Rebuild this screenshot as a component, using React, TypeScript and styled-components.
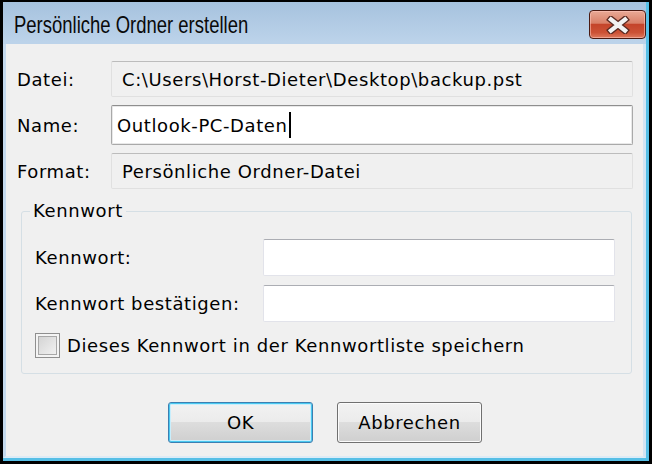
import React from "react"
import styled, { createGlobalStyle } from "styled-components"

const GlobalStyle = createGlobalStyle`
  html, body {
    margin: 0;
    padding: 0;
    background: #000000;
  }
  * {
    box-sizing: border-box;
  }
`

const Window = styled.div`
  width: 652px;
  height: 464px;
  padding: 2px 3px 3px 3px;
  background: #000000;
  font-family: "DejaVu Sans", Verdana, sans-serif;
  font-size: 18px;
  letter-spacing: 0.6px;
  color: #000000;
`

const Frame = styled.div`
  display: flex;
  flex-direction: column;
  height: 100%;
  background: linear-gradient(#a6c2de, #bcd3ea 40px);
  border-right: 3px solid #56bfe6;
  border-bottom: 3px solid #56bfe6;
`

const TitleBar = styled.div`
  display: flex;
  align-items: center;
  justify-content: space-between;
  height: 42px;
  padding: 3px 0 0 11px;
  flex-shrink: 0;
`

const TitleText = styled.span`
  display: inline-block;
  font-family: "Liberation Sans", Arial, sans-serif;
  font-size: 24px;
  letter-spacing: 0;
  transform: scaleX(0.77);
  transform-origin: left center;
  white-space: nowrap;
  color: #0a0a0a;
`

const CloseButton = styled.div`
  display: flex;
  align-items: center;
  justify-content: center;
  width: 57px;
  height: 29px;
  border: 1px solid #4a1a12;
  border-radius: 4px;
  background: linear-gradient(#e9a996 0%, #d98068 45%, #c4442a 50%, #cc5236 80%, #de7a5e 100%);
  box-shadow: inset 0 0 0 1px rgba(255, 200, 190, 0.55);
`

const Content = styled.div`
  flex: 1;
  display: flex;
  flex-direction: column;
  background: #f0f0f0;
  border-left: 3px solid #c5daee;
  border-right: 3px solid #d2e4f3;
  border-bottom: 2px solid #dcebf6;
  padding: 17px 10px 0 11px;
`

const FileGrid = styled.div`
  display: grid;
  grid-template-columns: 94px 1fr;
  row-gap: 8px;
  align-items: center;
`

const Label = styled.span`
  white-space: nowrap;
`

const ReadOnlyField = styled.div`
  display: flex;
  align-items: center;
  height: 36px;
  padding-left: 10px;
  background: #f0f0f0;
  border: 1px solid #e0e0e0;
  border-top-color: #bcbcbc;
  border-radius: 2px;
  white-space: nowrap;
`

const EditField = styled.div`
  display: flex;
  align-items: center;
  height: 40px;
  padding-left: 5px;
  background: #ffffff;
  border: 1px solid #a9a9a9;
  border-top-color: #8e8e8e;
  border-radius: 2px;
  box-shadow: inset 0 0 0 1px #e8e8e8;
  white-space: nowrap;
`

const Caret = styled.span`
  display: inline-block;
  width: 2px;
  height: 26px;
  margin-left: 1px;
  background: #000000;
`

const GroupBox = styled.fieldset`
  margin: 11px 1px 0 4px;
  padding: 17px 16px 15px 13px;
  border: 1px solid #d5dfe5;
  border-radius: 3px;
  min-width: 0;
`

const Legend = styled.legend`
  margin-left: -5px;
  padding: 0 3px;
  line-height: 22px;
`

const PasswordGrid = styled.div`
  display: grid;
  grid-template-columns: 228px 1fr;
  row-gap: 9px;
  align-items: center;
`

const PasswordField = styled.div`
  height: 37px;
  background: #ffffff;
  border: 1px solid #e2e3ea;
  border-top-color: #abadb3;
  border-radius: 2px;
`

const CheckRow = styled.label`
  display: flex;
  align-items: center;
  gap: 7px;
  margin-top: 11px;
  white-space: nowrap;
`

const CheckBox = styled.span`
  display: inline-block;
  width: 25px;
  height: 25px;
  border: 1px solid #8f8f8f;
  background: linear-gradient(135deg, #cfcfcf, #f6f6f6);
  box-shadow: inset 0 0 0 2px #f4f4f4, inset 0 0 0 3px #a8a8a8;
  flex-shrink: 0;
`

const ButtonRow = styled.div`
  display: flex;
  justify-content: center;
  gap: 24px;
  margin-top: 28px;
`

const Button = styled.button<{ $default?: boolean }>`
  width: 145px;
  height: 41px;
  font-family: "DejaVu Sans", Verdana, sans-serif;
  font-size: 18px;
  letter-spacing: 0.6px;
  color: #000000;
  border: 1px solid ${(p) => (p.$default ? "#3c7fb1" : "#707070")};
  border-radius: 3px;
  background: linear-gradient(#f2f2f2 0%, #ebebeb 50%, #dddddd 50%, #cfcfcf 100%);
  box-shadow: ${(p) =>
    p.$default ? "inset 0 0 0 1px #48c8f0, inset 0 0 0 2px #c8eefc" : "inset 0 0 0 1px #fbfbfb"};
  padding: 0;
`

// white "x" glyph of the Vista caption button, outlined dark
const CloseIcon = () => (
  <svg width="26" height="18" viewBox="0 0 26 18">
    <path d="M6 3.5 L20 14.5 M20 3.5 L6 14.5" stroke="#5a2a22" strokeWidth="7" strokeLinecap="square" />
    <path d="M6 3.5 L20 14.5 M20 3.5 L6 14.5" stroke="#f2f2f2" strokeWidth="4.4" strokeLinecap="square" />
  </svg>
)

const App: React.FC = () => {
  return (
    <>
      <GlobalStyle />
      <Window>
        <Frame>
          <TitleBar>
            <TitleText>Persönliche Ordner erstellen</TitleText>
            <CloseButton>
              <CloseIcon />
            </CloseButton>
          </TitleBar>
          <Content>
            <FileGrid>
              <Label>Datei:</Label>
              <ReadOnlyField>C:\Users\Horst-Dieter\Desktop\backup.pst</ReadOnlyField>
              <Label>Name:</Label>
              <EditField>
                Outlook-PC-Daten
                <Caret />
              </EditField>
              <Label>Format:</Label>
              <ReadOnlyField>Persönliche Ordner-Datei</ReadOnlyField>
            </FileGrid>

            <GroupBox>
              <Legend>Kennwort</Legend>
              <PasswordGrid>
                <Label>Kennwort:</Label>
                <PasswordField />
                <Label>Kennwort bestätigen:</Label>
                <PasswordField />
              </PasswordGrid>
              <CheckRow>
                <CheckBox />
                Dieses Kennwort in der Kennwortliste speichern
              </CheckRow>
            </GroupBox>

            <ButtonRow>
              <Button $default>OK</Button>
              <Button>Abbrechen</Button>
            </ButtonRow>
          </Content>
        </Frame>
      </Window>
    </>
  )
}

export default App
